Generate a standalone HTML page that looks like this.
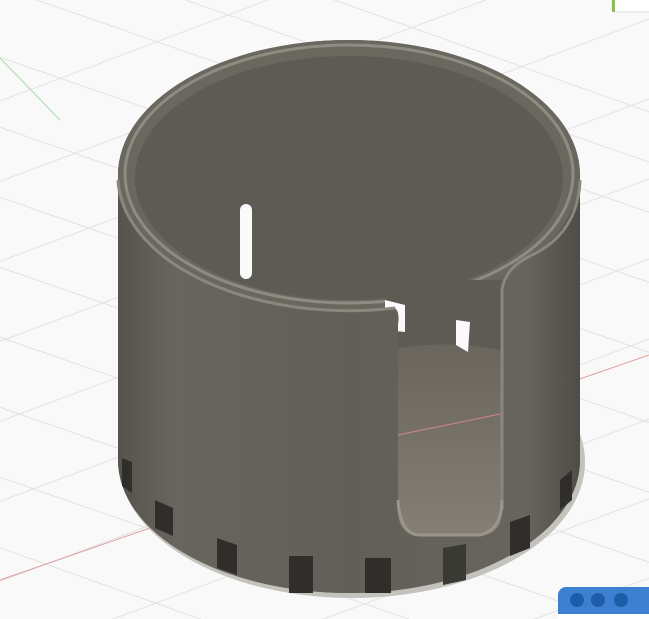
<!DOCTYPE html>
<html><head><meta charset="utf-8"><style>
html,body{margin:0;padding:0;width:649px;height:619px;overflow:hidden;background:#f9f9f9;font-family:"Liberation Sans",sans-serif}
svg{position:absolute;left:0;top:0;display:block}
</style></head><body>
<svg width="649" height="619" viewBox="0 0 649 619">
<defs>
<linearGradient id="body" x1="0" x2="1" y1="0" y2="0">
<stop offset="0" stop-color="#55534c"/><stop offset="0.12" stop-color="#67655d"/>
<stop offset="0.5" stop-color="#625f58"/><stop offset="0.88" stop-color="#67655d"/><stop offset="1" stop-color="#4f4d47"/>
</linearGradient>
<linearGradient id="floor" x1="0" x2="0" y1="0" y2="1">
<stop offset="0" stop-color="#6a665d"/><stop offset="1" stop-color="#857f74"/>
</linearGradient>
</defs>
<g stroke="#e2e2e2" stroke-width="1">
<line x1="-50" y1="40" x2="700" y2="300"/><line x1="-50" y1="110" x2="700" y2="370"/><line x1="-50" y1="180" x2="700" y2="440"/><line x1="-50" y1="250" x2="700" y2="510"/><line x1="-50" y1="320" x2="700" y2="580"/><line x1="-50" y1="390" x2="700" y2="650"/><line x1="-50" y1="460" x2="700" y2="720"/><line x1="-50" y1="-30" x2="700" y2="230"/><line x1="100" y1="-30" x2="700" y2="180"/><line x1="250" y1="-30" x2="700" y2="130"/><line x1="-50" y1="530" x2="400" y2="690"/>
<line x1="-50" y1="200" x2="700" y2="-80"/><line x1="-50" y1="280" x2="700" y2="0"/><line x1="-50" y1="360" x2="700" y2="80"/><line x1="-50" y1="440" x2="700" y2="160"/><line x1="-50" y1="520" x2="700" y2="240"/><line x1="-50" y1="600" x2="700" y2="320"/><line x1="-50" y1="680" x2="700" y2="400"/><line x1="50" y1="720" x2="700" y2="480"/><line x1="250" y1="720" x2="700" y2="560"/><line x1="-50" y1="120" x2="400" y2="-50"/>
</g>
<line x1="0" y1="580" x2="649" y2="355" stroke="#e39a9a" stroke-width="1"/>
<line x1="0" y1="58" x2="60" y2="120" stroke="#a8dba8" stroke-width="1"/>
<ellipse cx="352" cy="462" rx="233" ry="136" fill="#c4c2bc"/>
<path d="M118,175 A231,135 0 0 1 580,175 L580,460 A231,133 0 0 1 118,460 Z" fill="url(#body)"/>
<ellipse cx="349" cy="175" rx="231" ry="135" fill="#6a675f"/>
<ellipse cx="349" cy="174" rx="224" ry="129" fill="none" stroke="#8e8b82" stroke-width="3"/>
<ellipse cx="349" cy="178" rx="214" ry="122" fill="#5d5b54"/>
<rect x="240" y="204" width="12" height="75" rx="6" fill="#fafafa"/>
<rect x="385" y="280" width="125" height="80" fill="#5d5b54"/>
<path d="M385,350 Q450,338 510,352 L510,540 L385,540 Z" fill="url(#floor)"/>
<path d="M385,300 L405,305 L405,332 L385,330 Z" fill="#fafafa"/>
<path d="M456,320 L470,322 L468,352 L456,345 Z" fill="#fafafa"/>
<line x1="398" y1="435" x2="505" y2="413" stroke="#c88" stroke-width="1"/>
<path d="M118,180 A231,135 0 0 0 395,308 Q400,312 398,325 L398,510 Q398,535 420,535 L480,535 Q502,535 502,510 L502,290 Q505,268 530,256 Q578,234 580,180 L580,460 A231,133 0 0 1 118,460 Z" fill="url(#body)"/>
<path d="M118,180 A231,135 0 0 0 395,308" fill="none" stroke="#8a877e" stroke-width="3"/>
<path d="M502,510 L502,290 Q505,268 530,256 Q578,234 580,180" fill="none" stroke="#8a877e" stroke-width="3"/>
<path d="M398,500 Q400,535 420,535 L480,535 Q502,530 502,500" fill="none" stroke="#9a968c" stroke-width="3"/>
<g fill="#2f2e2b">
<path d="M122,458 L132,462 L132,493 L122,486 Z"/>
<path d="M155,500 L173,508 L173,536 L155,528 Z"/>
<path d="M217,538 L237,545 L237,575 L217,568 Z"/>
<rect x="289" y="556" width="24" height="37"/>
<rect x="365" y="558" width="26" height="35"/>
<path d="M443,548 L466,544 L466,580 L443,585 Z" fill="#3a3a35"/>
<path d="M510,522 L530,515 L530,548 L510,556 Z"/>
<path d="M560,480 L572,470 L572,500 L560,510 Z"/>
</g>
<rect x="612" y="-4" width="45" height="16" rx="3" fill="#fff" stroke="#ddd"/>
<rect x="612" y="0" width="3" height="12" fill="#8bc34a"/>
<rect x="558" y="587" width="100" height="40" rx="8" fill="#3d80d2"/>
<rect x="558" y="614" width="100" height="10" fill="#fff"/>
<circle cx="577" cy="600" r="7" fill="#1d5ca8"/>
<circle cx="598" cy="600" r="7" fill="#1d5ca8"/>
<circle cx="621" cy="600" r="7" fill="#1d5ca8"/>
</svg>
</body></html>
